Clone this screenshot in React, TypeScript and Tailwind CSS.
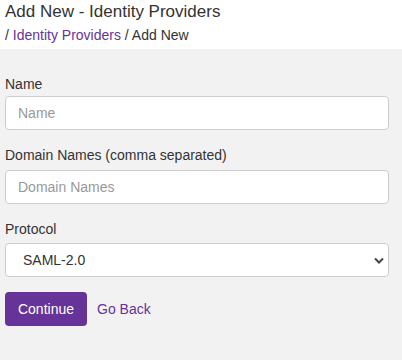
export default function App() {
  return (
    <div className="min-h-[360px] bg-[#f2f2f2] text-[#333] font-['Liberation_Sans',Arial,sans-serif]">
      <div className="bg-white px-[5px] pt-[1px] h-[49px]">
        <h1 className="text-[17px] leading-[22px]">Add New - Identity Providers</h1>
        <div className="text-[14px] leading-[20px] mt-[2px]">
          / <a href="#" className="text-[#663399]">Identity Providers</a> / Add New
        </div>
      </div>

      <form className="pl-[5px] pr-[13px] pt-[25px]" onSubmit={(e) => e.preventDefault()}>
        <label className="block text-[14px] leading-[20px] mb-[2px]">Name</label>
        <input
          placeholder="Name"
          className="block w-full h-[34px] rounded-[4px] border border-[#ccc] bg-white px-[12px] text-[14px] placeholder:text-[#999] outline-none"
        />

        <label className="block text-[14px] leading-[20px] mb-[5px] mt-[15px]">
          Domain Names (comma separated)
        </label>
        <input
          placeholder="Domain Names"
          className="block w-full h-[34px] rounded-[4px] border border-[#ccc] bg-white px-[12px] text-[14px] placeholder:text-[#999] outline-none"
        />

        <label className="block text-[14px] leading-[20px] mb-[4px] mt-[15px]">Protocol</label>
        <div className="relative">
          <select className="block w-full h-[34px] appearance-none rounded-[4px] border border-[#ccc] bg-white pl-[17px] pr-[30px] text-[14px] text-[#333] outline-none">
            <option>SAML-2.0</option>
          </select>
          <svg
            className="pointer-events-none absolute right-[5px] top-[14px]"
            width="10"
            height="7"
            viewBox="0 0 10 7"
          >
            <path d="M1 1.5 L5 5.5 L9 1.5" fill="none" stroke="#444" strokeWidth="2" />
          </svg>
        </div>

        <div className="mt-[15px] flex items-center gap-[10px]">
          <button
            type="submit"
            className="h-[34px] w-[82px] rounded-[4px] bg-[#663399] text-white text-[14px]"
          >
            Continue
          </button>
          <a href="#" className="text-[#663399] text-[14px]">
            Go Back
          </a>
        </div>
      </form>
    </div>
  );
}
